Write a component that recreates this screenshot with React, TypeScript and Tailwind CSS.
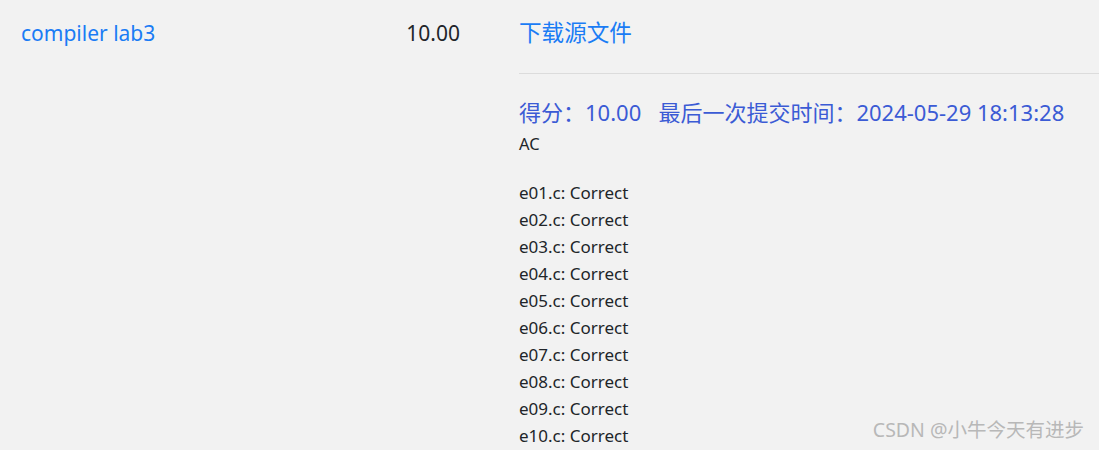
const cases = ["e01", "e02", "e03", "e04", "e05", "e06", "e07", "e08", "e09", "e10"];

export default function App() {
  return (
    <div
      className="relative h-[450px] w-[1099px] overflow-hidden bg-[#f2f2f2] text-[#212529]"
      style={{ fontFamily: '"Noto Sans", "Noto Sans CJK SC", sans-serif' }}
    >
      <div className="flex">
        {/* name */}
        <div className="flex-1 pl-[21px] pt-[18px]">
          <a className="text-[21px] leading-[30px] text-[#1a7cf5]">compiler lab3</a>
        </div>

        {/* score */}
        <div className="pr-[59px] pt-[18px] text-right text-[21px] leading-[30px]">10.00</div>

        {/* detail */}
        <div className="w-[580px] pt-[18px]">
          <a className="text-[22.6px] leading-[30px] text-[#1a7cf5]">下载源文件</a>
          <div className="mt-[25px] border-t border-[#dcdcdc]" />
          <div className="mt-[23px] whitespace-nowrap text-[22px] leading-[30px] text-[#3b5bd5]">
            得分：10.00&nbsp;&nbsp;&nbsp;最后一次提交时间：2024-05-29 18:13:28
          </div>
          <div className="mt-[5px] text-[16.5px] leading-[24px]">AC</div>
          <div className="mt-[23px] text-[17px] leading-[27px]">
            {cases.map((c) => (
              <div key={c}>{c}.c: Correct</div>
            ))}
          </div>
        </div>
      </div>

      {/* watermark */}
      <div className="absolute right-[15px] top-[415px] text-[19.5px] leading-[30px] text-[#b8b8b8]">
        CSDN @小牛今天有进步
      </div>
    </div>
  );
}
